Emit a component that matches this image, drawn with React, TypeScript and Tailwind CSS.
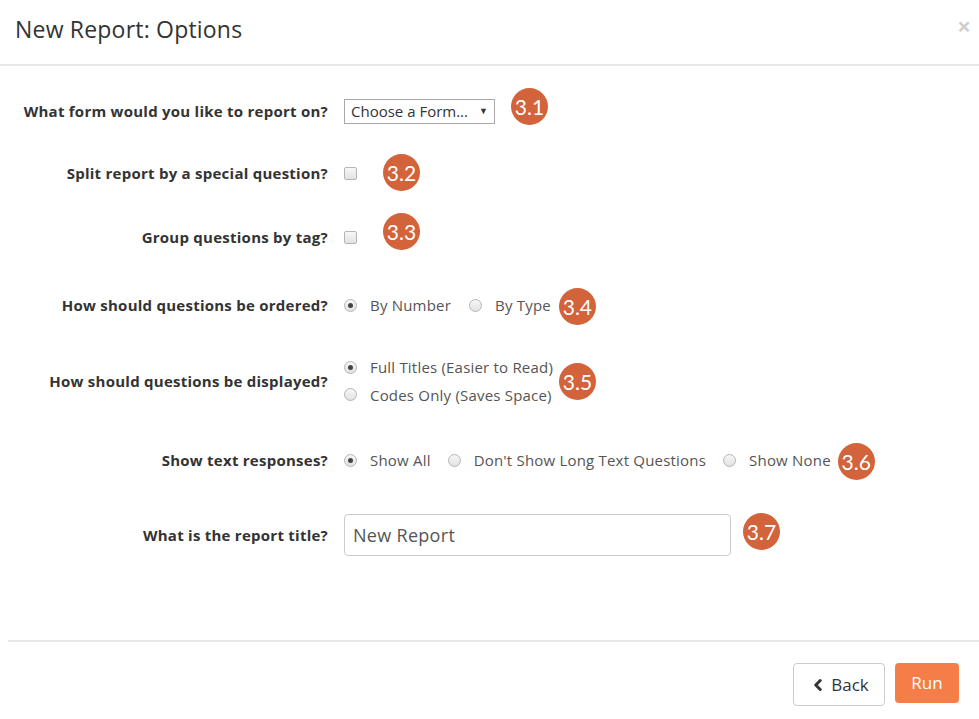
import { ChevronLeft } from 'lucide-react';

const font = { fontFamily: '"Open Sans", "Liberation Sans", sans-serif' };

function Badge({ n, className = '' }: { n: string; className?: string }) {
  return (
    <span
      className={`relative inline-flex h-[37px] w-[37px] shrink-0 items-center justify-center rounded-full bg-[#d2633b] text-[21px] leading-none text-white ${className}`}
      style={{ fontFamily: '"Lato", "Liberation Sans", sans-serif' }}
    >
      {n}
    </span>
  );
}

function Radio({ checked = false }: { checked?: boolean }) {
  return (
    <span className="inline-flex h-[13px] w-[13px] shrink-0 items-center justify-center rounded-full border border-[#b5b5b5] bg-gradient-to-b from-[#f7f7f7] to-[#e2e2e2]">
      {checked && <span className="h-[5px] w-[5px] rounded-full bg-[#444]" />}
    </span>
  );
}

function Check() {
  return <span className="inline-block h-[13px] w-[13px] shrink-0 rounded-[2px] border border-[#b5b5b5] bg-gradient-to-b from-[#f7f7f7] to-[#e2e2e2]" />;
}

function Option({ label, checked }: { label: string; checked?: boolean }) {
  return (
    <label className="flex items-center gap-[13px] text-[15px] tracking-[0.2px] text-[#555]">
      <Radio checked={checked} />
      <span>{label}</span>
    </label>
  );
}

function Row({ label, className = '', children }: { label: string; className?: string; children: React.ReactNode }) {
  return (
    <div className={`grid h-[50px] grid-cols-[328px_1fr] items-center gap-[16px] ${className}`}>
      <div className="text-right text-[15px] font-bold tracking-[0.25px] text-[#333]">{label}</div>
      <div className="flex items-center">{children}</div>
    </div>
  );
}

export default function App() {
  return (
    <div className="h-[719px] w-[979px] overflow-hidden bg-white" style={font}>
      {/* Header */}
      <div className="relative flex h-[66px] items-start border-b-2 border-[#e8e8e8] px-[15px] pt-[12px]">
        <h1 className="text-[23px] tracking-[0.2px] text-[#333]">New Report: Options</h1>
        <span className="absolute right-[8px] top-[8px] text-[24px] font-bold text-[#cfcfcf]">×</span>
      </div>

      {/* Body */}
      <div className="h-[574px] pt-[20px]">
        <Row label="What form would you like to report on?">
          <div className="flex h-[25px] w-[151px] items-center justify-between border border-[#a9a9a9] px-[6px] text-[15px] text-[#333]">
            <span>Choose a Form...</span>
            <span className="text-[9px]">▼</span>
          </div>
          <Badge n="3.1" className="-top-[5px] ml-[16px]" />
        </Row>

        <Row label="Split report by a special question?" className="mt-[12px]">
          <Check />
          <Badge n="3.2" className="-top-[1px] ml-[26px]" />
        </Row>

        <Row label="Group questions by tag?" className="mt-[14px]">
          <Check />
          <Badge n="3.3" className="-top-[6px] ml-[26px]" />
        </Row>

        <Row label="How should questions be ordered?" className="mt-[18px]">
          <Option label="By Number" checked />
          <span className="w-[18px]" />
          <Option label="By Type" />
          <Badge n="3.4" className="top-[1px] ml-[8px]" />
        </Row>

        <Row label="How should questions be displayed?" className="mt-[26px]">
          <div className="flex flex-col gap-[5px]">
            <Option label="Full Titles (Easier to Read)" checked />
            <Option label="Codes Only (Saves Space)" />
          </div>
          <Badge n="3.5" className="ml-[6px]" />
        </Row>

        <Row label="Show text responses?" className="mt-[29px]">
          <Option label="Show All" checked />
          <span className="w-[17px]" />
          <Option label="Don't Show Long Text Questions" />
          <span className="w-[17px]" />
          <Option label="Show None" />
          <Badge n="3.6" className="top-[1px] ml-[7px]" />
        </Row>

        <Row label="What is the report title?" className="mt-[25px]">
          <div className="flex h-[42px] w-[387px] items-center rounded-[4px] border border-[#cccccc] px-[8px] text-[18px] tracking-[0.3px] text-[#555]">
            New Report
          </div>
          <Badge n="3.7" className="-top-[4px] ml-[12px]" />
        </Row>
      </div>

      {/* Footer */}
      <div className="ml-[8px] flex justify-end gap-[10px] border-t-2 border-[#e8e8e8] pr-[20px] pt-[21px]">
        <button className="flex h-[43px] w-[92px] items-center justify-center gap-[4px] rounded-[4px] border border-[#cccccc] bg-white text-[17px] text-[#333]">
          <ChevronLeft className="h-[18px] w-[18px]" strokeWidth={4} />
          Back
        </button>
        <button className="flex h-[40px] w-[64px] items-center justify-center rounded-[4px] bg-[#f57d47] text-[17px] text-white">
          Run
        </button>
      </div>
    </div>
  );
}
